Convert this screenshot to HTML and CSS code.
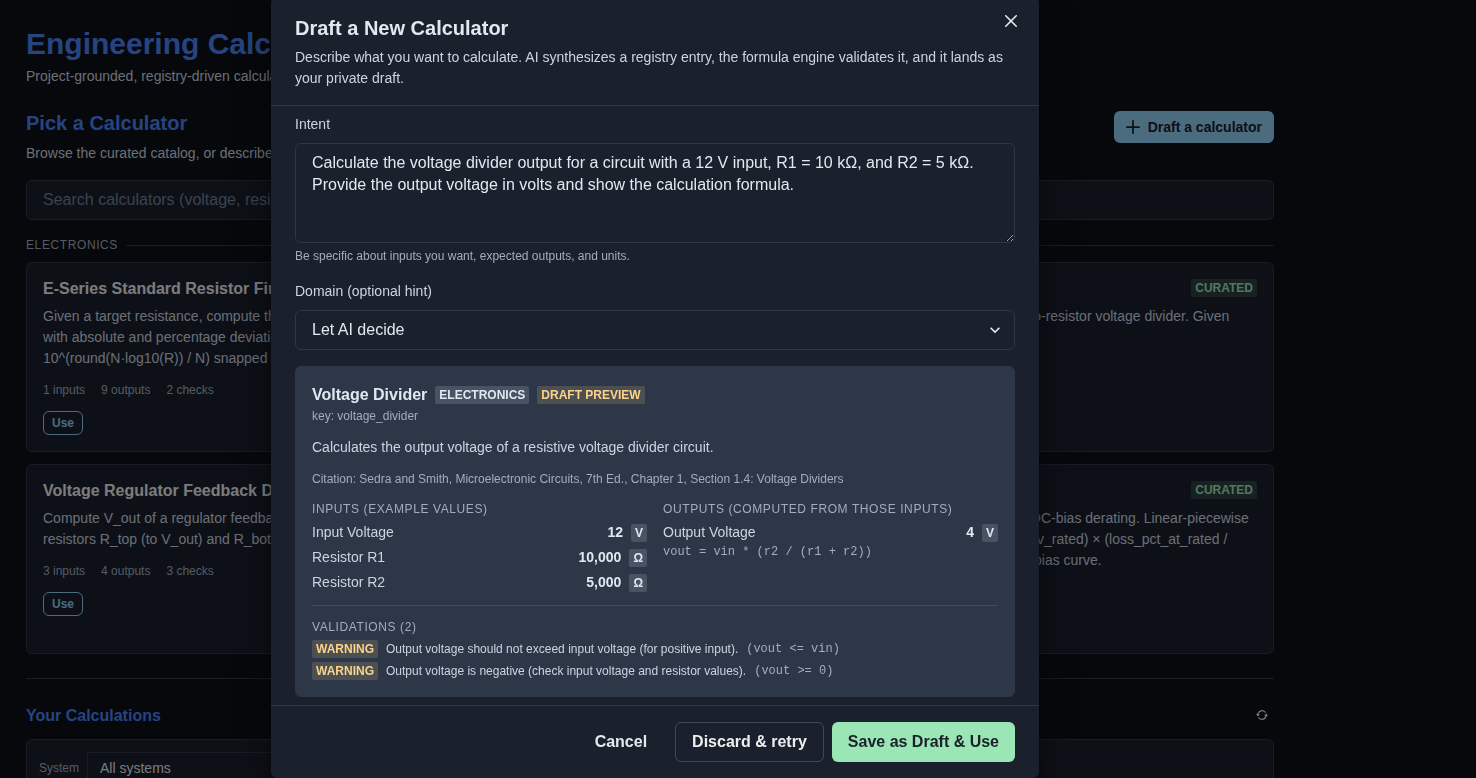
FILE: index.html
```html
<!DOCTYPE html>
<html lang="en">
<head>
<meta charset="utf-8">
<meta name="viewport" content="width=device-width, initial-scale=1">
<title>Engineering Calculators</title>
<link rel="stylesheet" href="styles.css">
</head>
<body>
<main class="page">
  <header class="page-header">
    <h1 class="page-title">Engineering Calculators</h1>
    <p class="text">Project-grounded, registry-driven calculators.</p>
  </header>

  <section class="picker">
    <div class="picker-head">
      <div class="picker-intro">
        <h2 class="section-title">Pick a Calculator</h2>
        <p class="text">Browse the curated catalog, or describe what you need.</p>
      </div>
      <button class="btn btn-sm btn-blue" type="button">
        <svg class="icon-md" viewBox="0 0 24 24" aria-hidden="true"><path fill="currentColor" d="M0,12a1.5,1.5,0,0,0,1.5,1.5h8.75a.25.25,0,0,1,.25.25V22.5a1.5,1.5,0,0,0,3,0V13.75a.25.25,0,0,1,.25-.25H22.5a1.5,1.5,0,0,0,0-3H13.75a.25.25,0,0,1-.25-.25V1.5a1.5,1.5,0,0,0-3,0v8.75a.25.25,0,0,1-.25.25H1.5A1.5,1.5,0,0,0,0,12Z"/></svg>
        Draft a calculator
      </button>
    </div>
    <input class="field search" type="search" aria-label="Search calculators" placeholder="Search calculators (voltage, resistor, filter)">
    <div class="catalog">
      <h3 class="group-title">Electronics</h3>
      <div class="cards">
        <article class="card">
          <div class="card-head"><h4 class="card-title">E-Series Standard Resistor Finder</h4></div>
          <p class="text">Given a target resistance, compute the nearest E24 value with absolute and percentage deviation. Value = 10^(round(N·log10(R)) / N) snapped to series.</p>
          <p class="stats"><span>1 inputs</span><span>9 outputs</span><span>2 checks</span></p>
          <button class="btn btn-xs btn-outline-blue" type="button">Use</button>
        </article>
        <article class="card">
          <div class="card-head"><h4 class="card-title">Ohm's Law</h4><span class="badge badge-green">Curated</span></div>
          <p class="text">Voltage, current and resistance.</p>
          <button class="btn btn-xs btn-outline-blue" type="button">Use</button>
        </article>
        <article class="card">
          <div class="card-head"><h4 class="card-title">Voltage Divider</h4><span class="badge badge-green">Curated</span></div>
          <p class="text">Output voltage in any two-resistor voltage divider. Given resistors.</p>
          <button class="btn btn-xs btn-outline-blue" type="button">Use</button>
        </article>
        <article class="card">
          <div class="card-head"><h4 class="card-title">Voltage Regulator Feedback Divider</h4></div>
          <p class="text">Compute V_out of a regulator feedback divider from resistors R_top (to V_out) and R_bot (to ground).</p>
          <p class="stats"><span>3 inputs</span><span>4 outputs</span><span>3 checks</span></p>
          <button class="btn btn-xs btn-outline-blue" type="button">Use</button>
        </article>
        <article class="card">
          <div class="card-head"><h4 class="card-title">RC Filter</h4><span class="badge badge-green">Curated</span></div>
          <p class="text">Cutoff frequency of an RC filter.</p>
          <button class="btn btn-xs btn-outline-blue" type="button">Use</button>
        </article>
        <article class="card">
          <div class="card-head"><h4 class="card-title">Capacitor Derating</h4><span class="badge badge-green">Curated</span></div>
          <p class="text">X5R Ceramic capacitor DC-bias derating. Linear-piecewise X5R model: 1 - (v_bias / v_rated) × (loss_pct_at_rated / 100) on each datasheet bias curve.</p>
          <p class="stats"><span>4 inputs</span><span>2 outputs</span></p>
          <button class="btn btn-xs btn-outline-blue" type="button">Use</button>
        </article>
      </div>
    </div>
  </section>

  <section class="saved">
    <div class="saved-head">
      <h2 class="saved-title">Your Calculations</h2>
      <button class="icon-btn icon-btn-xs" type="button" aria-label="Refresh">
        <svg class="icon-sm" viewBox="0 0 24 24" aria-hidden="true"><g fill="currentColor"><path d="M10.319,4.936a7.239,7.239,0,0,1,7.1,2.252,1.25,1.25,0,1,0,1.872-1.657A9.737,9.737,0,0,0,9.743,2.5,10.269,10.269,0,0,0,2.378,9.61a.249.249,0,0,1-.271.178l-1.033-.13A.491.491,0,0,0,.6,9.877a.5.5,0,0,0-.019.526l2.476,4.342a.5.5,0,0,0,.373.248.43.43,0,0,0,.062,0,.5.5,0,0,0,.359-.152l3.477-3.593a.5.5,0,0,0-.3-.844L5.15,10.172a.25.25,0,0,1-.2-.333A7.7,7.7,0,0,1,10.319,4.936Z"/><path d="M23.406,14.1a.5.5,0,0,0,.015-.526l-2.5-4.329A.5.5,0,0,0,20.546,9a.489.489,0,0,0-.421.151l-3.456,3.614a.5.5,0,0,0,.3.842l1.848.221a.249.249,0,0,1,.183.117.253.253,0,0,1,.023.216,7.688,7.688,0,0,1-5.369,4.9,7.243,7.243,0,0,1-7.1-2.253,1.25,1.25,0,1,0-1.872,1.656,9.74,9.74,0,0,0,9.549,3.03,10.261,10.261,0,0,0,7.369-7.12.251.251,0,0,1,.27-.179l1.058.127a.422.422,0,0,0,.06,0A.5.5,0,0,0,23.406,14.1Z"/></g></svg>
      </button>
    </div>
    <div class="filters">
      <label class="filter-label" for="system">System</label>
      <select class="filter-select" id="system"><option>All systems</option></select>
    </div>
  </section>
</main>

<div class="overlay">
  <div class="overlay-frame">
    <div class="modal" role="dialog" aria-modal="true" aria-labelledby="modal-title">
      <header class="modal-header">
        <h2 class="modal-title" id="modal-title">Draft a New Calculator</h2>
        <p class="text">Describe what you want to calculate. AI synthesizes a registry entry, the formula engine validates it, and it lands as your private draft.</p>
        <button class="icon-btn modal-close" type="button" aria-label="Close">
          <svg class="icon-sm" viewBox="0 0 24 24" aria-hidden="true"><path fill="currentColor" d="M.439,21.44a1.5,1.5,0,0,0,2.122,2.121L11.823,14.3a.25.25,0,0,1,.354,0l9.262,9.263a1.5,1.5,0,1,0,2.122-2.121L14.3,12.177a.25.25,0,0,1,0-.354l9.263-9.262A1.5,1.5,0,0,0,21.439.44L12.177,9.7a.25.25,0,0,1-.354,0L2.561.44A1.5,1.5,0,0,0,.439,2.561L9.7,11.823a.25.25,0,0,1,0,.354Z"/></svg>
        </button>
      </header>

      <div class="modal-body">
        <div class="form-control">
          <label class="label" for="intent">Intent</label>
          <textarea class="field intent" id="intent" aria-describedby="intent-help">Calculate the voltage divider output for a circuit with a 12 V input, R1 = 10 kΩ, and R2 = 5 kΩ. Provide the output voltage in volts and show the calculation formula.</textarea>
          <p class="help" id="intent-help">Be specific about inputs you want, expected outputs, and units.</p>
        </div>
        <div class="form-control">
          <label class="label" for="domain">Domain (optional hint)</label>
          <div class="select-wrap">
            <select class="field select" id="domain"><option>Let AI decide</option></select>
            <svg class="chevron" viewBox="0 0 24 24" aria-hidden="true"><path fill="currentColor" d="M16.59 8.59L12 13.17 7.41 8.59 6 10l6 6 6-6z"/></svg>
          </div>
        </div>

        <section class="preview">
          <div>
            <div class="preview-head">
              <h3 class="preview-title">Voltage Divider</h3>
              <span class="badge badge-gray">Electronics</span>
              <span class="badge badge-orange">Draft preview</span>
            </div>
            <p class="muted">key: voltage_divider</p>
          </div>
          <p class="text">Calculates the output voltage of a resistive voltage divider circuit.</p>
          <p class="muted">Citation: Sedra and Smith, Microelectronic Circuits, 7th Ed., Chapter 1, Section 1.4: Voltage Dividers</p>
          <div class="io">
            <div class="io-col">
              <h4 class="overline">Inputs (example values)</h4>
              <div class="io-row"><span>Input Voltage</span><strong class="value">12</strong><span class="badge badge-gray">V</span></div>
              <div class="io-row"><span>Resistor R1</span><strong class="value">10,000</strong><span class="badge badge-gray">Ω</span></div>
              <div class="io-row"><span>Resistor R2</span><strong class="value">5,000</strong><span class="badge badge-gray">Ω</span></div>
            </div>
            <div class="io-col">
              <h4 class="overline">Outputs (computed from those inputs)</h4>
              <div>
                <div class="io-row"><span>Output Voltage</span><strong class="value">4</strong><span class="badge badge-gray">V</span></div>
                <code class="code formula">vout = vin * (r2 / (r1 + r2))</code>
              </div>
            </div>
          </div>
          <div class="validations">
            <h4 class="overline">Validations (2)</h4>
            <div class="check"><span class="badge badge-orange">Warning</span><span>Output voltage should not exceed input voltage (for positive input).</span><code class="code">(vout &lt;= vin)</code></div>
            <div class="check"><span class="badge badge-orange">Warning</span><span>Output voltage is negative (check input voltage and resistor values).</span><code class="code">(vout &gt;= 0)</code></div>
          </div>
        </section>
      </div>

      <footer class="modal-footer">
        <button class="btn btn-ghost" type="button">Cancel</button>
        <div class="footer-actions">
          <button class="btn btn-outline" type="button">Discard &amp; retry</button>
          <button class="btn btn-green" type="button">Save as Draft &amp; Use</button>
        </div>
      </footer>
    </div>
  </div>
</div>
</body>
</html>
```

FILE: styles.css
```css
:root {
  --page: #0d1117;
  --surface: #1a202c;
  --raised: #2d3748;
  --line: #2d3748;
  --line-soft: rgba(255, 255, 255, 0.16);
  --text: #e2e8f0;
  --text-soft: #cbd5e0;
  --text-muted: #a0aec0;
  --brand: #4a82f5;
  --blue: #90cdf4;
  --green: #9ae6b4;
  --orange: #fbd38d;
}

*, *::before, *::after { box-sizing: border-box; }

html, body { height: 100%; }

body {
  margin: 0;
  overflow: hidden;
  background: var(--page);
  color: var(--text);
  font: 16px/24px "Liberation Sans", Arial, sans-serif;
}

h1, h2, h3, h4, p { margin: 0; }

button, input, select, textarea { font: inherit; color: inherit; }

.text { font-size: 14px; line-height: 21px; color: var(--text-soft); }
.muted, .help { font-size: 12px; line-height: 18px; color: var(--text-muted); }

/* Buttons */
.btn {
  display: inline-flex;
  align-items: center;
  justify-content: center;
  gap: 8px;
  height: 40px;
  padding: 0 16px;
  border: 1px solid transparent;
  border-radius: 6px;
  background: transparent;
  font-weight: 700;
  white-space: nowrap;
  cursor: pointer;
}
.btn-sm { height: 32px; padding: 0 11px; font-size: 14px; }
.btn-xs { height: 24px; padding: 0 8px; font-size: 12px; }
.btn-ghost { padding: 0 15px; }
.btn-blue { background: var(--blue); color: var(--surface); }
.btn-green { padding: 0 15px; background: var(--green); color: var(--surface); }
.btn-outline { border-color: rgba(255, 255, 255, 0.18); color: #eeeeef; }
.btn-outline-blue { border-color: var(--blue); color: var(--blue); }

.icon-btn {
  display: grid;
  place-items: center;
  width: 32px;
  height: 32px;
  padding: 0;
  border: 0;
  border-radius: 6px;
  background: transparent;
  cursor: pointer;
}
.icon-btn-xs { width: 24px; height: 24px; }
.icon-sm { width: 12px; height: 12px; }
.icon-md { width: 14px; height: 14px; }

/* Badges */
.badge {
  flex: none;
  padding: 0 4px;
  border-radius: 2px;
  font-size: 12px;
  line-height: 18px;
  font-weight: 700;
  text-transform: uppercase;
}
.badge-gray { background: rgba(226, 232, 240, 0.16); color: var(--text); }
.badge-orange { background: rgba(251, 211, 141, 0.16); color: var(--orange); }
.badge-green { background: rgba(154, 230, 180, 0.16); color: var(--green); }

/* Fields */
.field {
  width: 100%;
  height: 40px;
  padding: 0 16px;
  border: 1px solid var(--line);
  border-radius: 6px;
  outline: 0;
  background: var(--surface);
}
.search { appearance: none; }
.search::placeholder { color: #718096; opacity: 1; }

/* Page */
.page {
  max-width: 1300px;
  padding: 26px;
  display: flex;
  flex-direction: column;
  gap: 24px;
}
.page-header { display: flex; flex-direction: column; gap: 4px; }
.page-title { font-size: 30px; line-height: 36px; color: var(--brand); }
.picker { display: flex; flex-direction: column; gap: 16px; }
.picker-head { display: flex; justify-content: space-between; align-items: flex-start; }
.picker-intro { display: flex; flex-direction: column; gap: 8px; }
.section-title { font-size: 20px; line-height: 24px; color: var(--brand); }
.catalog { display: flex; flex-direction: column; gap: 8px; }
.group-title, .overline {
  font-size: 12px;
  line-height: 18px;
  font-weight: 400;
  letter-spacing: 0.05em;
  text-transform: uppercase;
  color: var(--text-muted);
}
.group-title { display: flex; align-items: center; gap: 8px; }
.group-title::after { content: ""; flex: 1; border-top: 1px solid var(--line-soft); }

.cards { display: grid; grid-template-columns: repeat(3, minmax(0, 1fr)); gap: 12px; }
.card {
  display: flex;
  flex-direction: column;
  align-items: flex-start;
  gap: 12px;
  padding: 16px;
  border: 1px solid var(--line);
  border-radius: 6px;
  background: var(--surface);
}
.card-head {
  display: flex;
  align-self: stretch;
  justify-content: space-between;
  gap: 8px;
  height: 19px;
  margin-bottom: -4px;
}
.card-head .badge { height: 18px; }
.card-title { font-size: 16px; line-height: 19px; color: #eeeeef; white-space: nowrap; }
.stats { display: flex; gap: 16px; font-size: 12px; line-height: 18px; color: var(--text-muted); }

.saved {
  display: flex;
  flex-direction: column;
  gap: 12px;
  padding-top: 24px;
  border-top: 1px solid var(--line-soft);
}
.saved-head { display: flex; justify-content: space-between; align-items: center; }
.saved-title { font-size: 16px; line-height: 19px; color: var(--brand); }
.filters {
  display: flex;
  align-items: center;
  gap: 8px;
  padding: 12px;
  border: 1px solid var(--line);
  border-radius: 6px;
  background: var(--surface);
}
.filter-label { font-size: 12px; color: var(--text-muted); }
.filter-select {
  width: 240px;
  height: 32px;
  padding: 0 12px;
  appearance: none;
  border: 1px solid var(--line);
  border-radius: 2px;
  background: var(--surface);
  font-size: 14px;
}

/* Modal */
.overlay {
  position: fixed;
  inset: 0;
  overflow: hidden;
  background: rgba(0, 0, 0, 0.48);
}
.overlay-frame {
  display: flex;
  justify-content: center;
  align-items: flex-end;
  max-width: 1310px;
  height: 100%;
}
.modal {
  position: relative;
  flex: 0 1 768px;
  border-radius: 6px;
  background: var(--surface);
  box-shadow: 0 0 0 1px rgba(0, 0, 0, 0.1), 0 5px 10px rgba(0, 0, 0, 0.2), 0 15px 40px rgba(0, 0, 0, 0.4);
  will-change: transform;
}
.modal-header {
  display: flex;
  flex-direction: column;
  gap: 4px;
  padding: 16px 24px;
  border-bottom: 1px solid var(--line);
}
.modal-title { font-size: 20px; line-height: 30px; }
.modal-close { position: absolute; top: 8px; right: 12px; }

.modal-body { display: flex; flex-direction: column; gap: 16px; padding: 8px 24px; }
.form-control { display: flex; flex-direction: column; }
.label { margin-bottom: 8px; font-size: 14px; line-height: 21px; color: var(--text-soft); }
.intent { height: 100px; padding: 8px 16px; line-height: 22px; resize: vertical; }
.help { margin-top: 4px; }
.select-wrap { display: grid; align-items: center; }
.select-wrap > * { grid-area: 1 / 1; }
.select { appearance: none; }
.chevron { justify-self: end; width: 20px; height: 20px; margin-right: 10px; pointer-events: none; }

.preview {
  display: flex;
  flex-direction: column;
  gap: 12px;
  padding: 16px;
  border: 1px solid var(--raised);
  border-radius: 6px;
  background: var(--raised);
}
.preview-head { display: flex; align-items: center; gap: 8px; }
.preview-title { font-size: 16px; line-height: 24px; }
.io { display: grid; grid-template-columns: repeat(2, minmax(0, 1fr)); gap: 16px; }
.io-col { display: flex; flex-direction: column; gap: 4px; }
.io-row {
  display: flex;
  align-items: center;
  gap: 8px;
  height: 21px;
  font-size: 14px;
  line-height: 21px;
  color: var(--text-soft);
}
.value { margin-left: auto; color: var(--text); }
.code { font: 12px/18px "Liberation Mono", monospace; color: var(--text-muted); }
.formula { display: block; }
.validations {
  display: flex;
  flex-direction: column;
  gap: 4px;
  padding-top: 12px;
  border-top: 1px solid rgba(255, 255, 255, 0.1);
}
.check {
  display: flex;
  gap: 8px;
  font-size: 12px;
  line-height: 18px;
  color: var(--text-soft);
}

.modal-footer {
  display: flex;
  justify-content: flex-end;
  gap: 12px;
  padding: 16px 24px;
  border-top: 1px solid var(--line);
}
.footer-actions { display: flex; gap: 8px; }
```
